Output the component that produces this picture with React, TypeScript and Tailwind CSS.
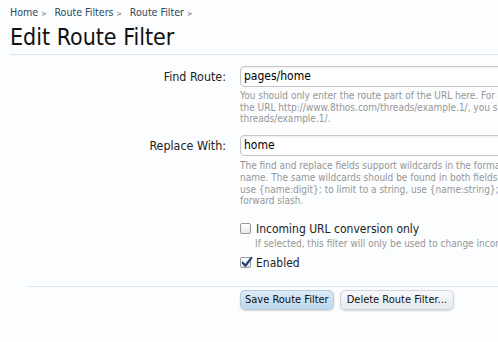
import React from 'react';

const FONT = "font-['DejaVu_Sans_Condensed','DejaVu_Sans',sans-serif]";

function Crumb({ label }: { label: string }) {
  return (
    <span className="mr-[8px] text-[#2b485c]">
      {label}
      <span className="ml-[3px] text-[7px] text-[#555]">&gt;</span>
    </span>
  );
}

function CheckBox({ checked }: { checked?: boolean }) {
  return (
    <span className="relative inline-flex h-[11px] w-[11px] shrink-0 rounded-[2px] border border-[#9a9a9a] bg-gradient-to-b from-white to-[#e8e8e8]">
      {checked && (
        <svg viewBox="0 0 12 12" className="absolute -left-[1px] -top-[2px] h-[13px] w-[13px]">
          <path d="M2.5 6.2 L5 9 L10.5 1.8" fill="none" stroke="#1f3f7a" strokeWidth="2" strokeLinecap="round" strokeLinejoin="round" />
        </svg>
      )}
    </span>
  );
}

export default function App() {
  return (
    <div className={`h-[342px] w-[498px] overflow-hidden bg-[#fcfdfe] ${FONT}`}>
      <div className="w-[700px] pl-[10px] pt-[5px]">
        {/* Breadcrumb */}
        <div className="text-[10.6px] leading-[14px]">
          <Crumb label="Home" />
          <Crumb label="Route Filters" />
          <Crumb label="Route Filter" />
        </div>
        <h1 className="mt-[2px] text-[23px] leading-[28px] text-[#111]">Edit Route Filter</h1>
        <div className="mt-[3px] border-b border-[#d7e4ee]" />

        {/* Form */}
        <div className="mt-[11px] grid grid-cols-[216px_1fr] gap-x-[14px]">
          <label className="pt-[3px] text-right text-[12.4px] leading-[16px] text-[#222]">Find Route:</label>
          <div>
            <div className="h-[21px] w-[400px] rounded-[4px] border border-[#c6c6c6] bg-white px-[3px] text-[12px] leading-[19px] text-black shadow-[inset_0_1px_2px_rgba(0,0,0,0.08)]">
              pages/home
            </div>
            <p className="mt-[3px] text-[10px] leading-[11.7px] text-[#969696]">
              You should only enter the route part of the URL here. For example, if you want to match
              <br />
              the URL http://www.8thos.com/threads/example.1/, you should enter
              <br />
              threads/example.1/.
            </p>
          </div>

          <label className="mt-[10px] pt-[3px] text-right text-[12.4px] leading-[16px] text-[#222]">Replace With:</label>
          <div className="mt-[10px]">
            <div className="h-[21px] w-[400px] rounded-[4px] border border-[#c6c6c6] bg-white px-[3px] text-[12px] leading-[19px] text-black shadow-[inset_0_1px_2px_rgba(0,0,0,0.08)]">
              home
            </div>
            <p className="mt-[4px] text-[10px] leading-[11.7px] text-[#969696]">
              The find and replace fields support wildcards in the format of {'{name}'}, where name is the
              <br />
              name. The same wildcards should be found in both fields. To limit a wildcard to digits,
              <br />
              use {'{name:digit}'}; to limit to a string, use {'{name:string}'}; {'{name}'} matches up to a
              <br />
              forward slash.
            </p>
          </div>

          <div />
          <div className="mt-[14px]">
            <div className="flex items-center gap-[5px] text-[12px] leading-[16px] text-[#222]">
              <CheckBox />
              <span>Incoming URL conversion only</span>
            </div>
            <p className="pl-[15px] text-[10px] leading-[13px] text-[#969696]">
              If selected, this filter will only be used to change incoming URLs.
            </p>
            <div className="mt-[5px] flex items-center gap-[5px] text-[12px] leading-[16px] text-[#222]">
              <CheckBox checked />
              <span>Enabled</span>
            </div>
          </div>
        </div>

        <div className="ml-[17px] mt-[15px] border-b border-[#d7e4ee]" />
        <div className="ml-[230px] mt-[3px] flex gap-[6px] text-[11px] leading-[14px] text-[#111]">
          <button className="h-[20px] rounded-[5px] border border-[#b4c8d8] bg-gradient-to-b from-[#dcebf7] to-[#bcd6ec] px-[4px] shadow-[0_1px_2px_rgba(0,0,0,0.15)]">
            Save Route Filter
          </button>
          <button className="h-[20px] rounded-[5px] border border-[#d0d6dc] bg-gradient-to-b from-[#f8f9fb] to-[#e6eaee] px-[6px] shadow-[0_1px_2px_rgba(0,0,0,0.15)]">
            Delete Route Filter...
          </button>
        </div>
      </div>
    </div>
  );
}
